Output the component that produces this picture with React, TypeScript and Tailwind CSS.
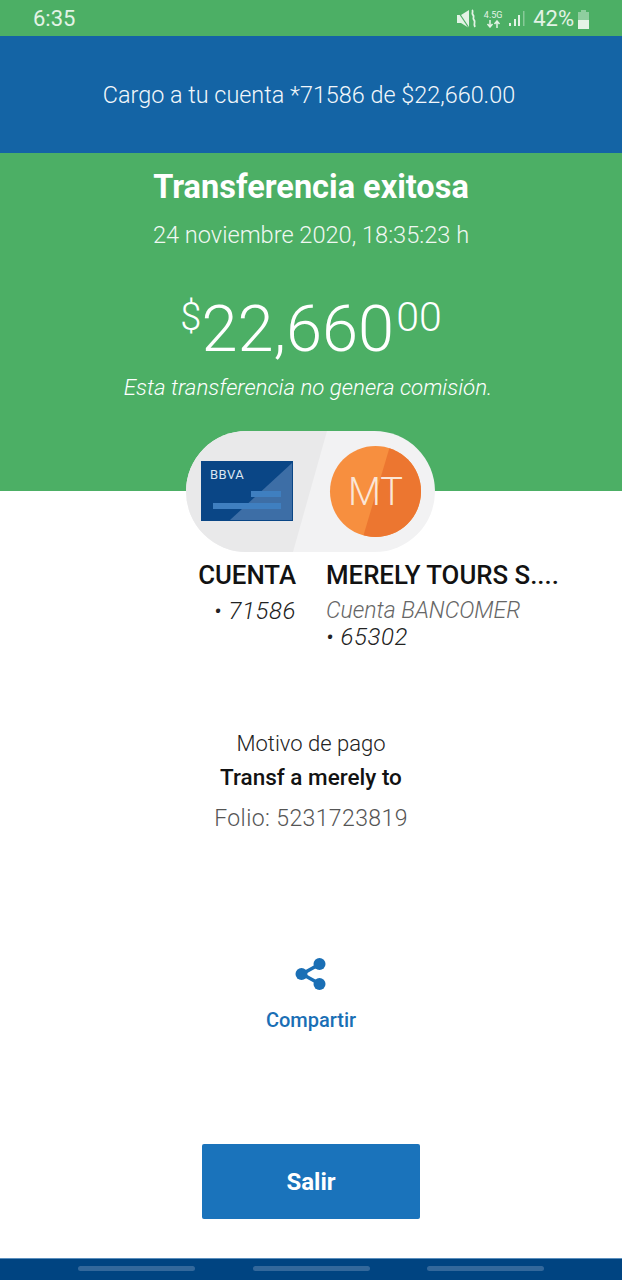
import React from 'react';

const font = { fontFamily: 'Roboto, sans-serif' };

const StatusIcons = () => (
  <div className="flex items-center">
    <svg width="20" height="20" viewBox="0 0 20 20" className="mr-[7px]">
      <path d="M0 6h4l8-5v18l-8-5H0z" fill="#e3f3e6" />
      <path d="M0 1l12 18" stroke="#4caf65" strokeWidth="1.200" />
      <path d="M15 1c2 1.500-1 3 1 5s-1 3 1 5-1 3 1 7" stroke="#e3f3e6" strokeWidth="1.800" fill="none" />
    </svg>
    <div className="flex w-[18px] flex-col items-center mr-[6px]">
      <span className="text-[9px] leading-[10px] text-[#e3f3e6]">4.5G</span>
      <svg width="15" height="8" viewBox="0 0 15 8">
        <path d="M4 0v6M1.500 4L4 7l2.500-3M11 8V2M8.500 4L11 1l2.500 3" stroke="#e3f3e6" strokeWidth="1.500" fill="none" />
      </svg>
    </div>
    <svg width="17" height="18" viewBox="0 0 17 18" className="mr-[8px]">
      <rect x="1" y="13" width="2" height="3" fill="#e3f3e6" />
      <rect x="6" y="9" width="2" height="7" fill="#e3f3e6" />
      <rect x="10" y="5" width="2" height="11" fill="#e3f3e6" />
      <rect x="15" y="1" width="1.500" height="15" fill="#e3f3e6" opacity="0.4" />
    </svg>
    <span className="text-[22px] leading-none text-[#e3f3e6] mr-[3px]">42%</span>
    <svg width="13" height="19" viewBox="0 0 13 19">
      <path d="M4 0h5v2h3v17H1V2h3z" fill="#e3f3e6" opacity="0.45" />
      <rect x="1" y="10" width="11" height="9" fill="#e3f3e6" />
    </svg>
  </div>
);

const CardArt = () => (
  <svg width="92" height="60" viewBox="0 0 92 60">
    <rect width="92" height="60" fill="#0a4686" />
    <path d="M91 2V59H29z" fill="#3d6ea6" />
    <rect x="50" y="30" width="30" height="6" fill="#3f7fc0" />
    <rect x="12" y="42" width="68" height="6" fill="#3f7fc0" />
    <text x="9" y="18" fill="#dbe6f2" fontSize="13" letterSpacing="0.5" fontFamily="Roboto, sans-serif" fontWeight="400">BBVA</text>
  </svg>
);

const Avatar = () => (
  <div className="relative flex h-[91px] w-[91px] items-center justify-center overflow-hidden rounded-full bg-[#f78f3f]">
    <svg width="91" height="91" viewBox="0 0 91 91" className="absolute inset-0">
      <path d="M60 0H91V91H33z" fill="#ec7630" />
    </svg>
    <span className="relative text-[38px] font-light leading-none text-[#fbe6d6]">MT</span>
  </div>
);

const ShareIcon = () => (
  <svg width="32" height="34" viewBox="0 0 32 34">
    <path d="M25 7L7 17l18 10" stroke="#1a6fb5" strokeWidth="3.500" fill="none" />
    <circle cx="24.500" cy="7" r="6" fill="#1a6fb5" />
    <circle cx="6.500" cy="17" r="6" fill="#1a6fb5" />
    <circle cx="24.500" cy="27" r="6" fill="#1a6fb5" />
  </svg>
);

export default function App() {
  return (
    <div className="flex h-[1280px] w-[622px] flex-col overflow-hidden bg-white" style={font}>
      <div className="bg-[#4caf65]">
        <div className="flex h-[36px] items-center justify-between pl-[33px] pr-[32px] pt-[2px]">
          <span className="text-[22px] leading-none text-[#e3f3e6]">6:35</span>
          <StatusIcons />
        </div>
        <div className="flex h-[117px] items-center justify-center bg-[#1464a5] pr-[4px] pt-[2px]">
          <span className="text-[23.400px] font-light text-[#f2f7fb]">Cargo a tu cuenta *71586 de $22,660.00</span>
        </div>
        <div className="flex h-[338px] flex-col items-center">
          <h1 className="mt-[14px] text-[32.500px] font-bold leading-[40px] text-white">Transferencia exitosa</h1>
          <p className="mt-[13px] text-[23.600px] font-light leading-[30px] text-[#f0f8f2]">24 noviembre 2020, 18:35:23 h</p>
          <div className="mt-[37px] flex items-start text-white">
            <span className="mt-[10px] text-[38px] font-light leading-[40px]">$</span>
            <span className="mr-[2px] text-[65px] font-light leading-[84px]">22,660</span>
            <span className="mt-[10px] text-[41px] font-light leading-[40px]">00</span>
          </div>
          <p className="mt-[1px] pr-[6px] text-[22.300px] font-light italic leading-[30px] text-white">Esta transferencia no genera comisión.</p>
        </div>
      </div>

      <div className="relative mt-[-60px] ml-[186px] flex h-[121px] w-[249px] items-center overflow-hidden rounded-full bg-[#f2f2f3]">
        <svg width="142" height="121" viewBox="0 0 142 121" className="absolute left-0 top-0">
          <path d="M0 0H141L107 121H0z" fill="#e9e9ea" />
        </svg>
        <div className="relative ml-[15px] flex items-center">
          <div className="mt-[-1px]">
            <CardArt />
          </div>
          <div className="ml-[37px]">
            <Avatar />
          </div>
        </div>
      </div>

      <div className="mt-[8px] flex">
        <div className="w-[296px] text-right">
          <div className="text-[25.800px] font-medium leading-[30px] text-[#121212]">CUENTA</div>
          <div className="mt-[8px] text-[24px] font-light italic leading-[26px] tracking-[0.6px] text-[#222]">• 71586</div>
        </div>
        <div className="ml-[30px]">
          <div className="text-[25.800px] font-medium leading-[30px] text-[#121212]">MERELY TOURS S....</div>
          <div className="mt-[8px] text-[23px] font-light italic leading-[26px] text-[#666]">Cuenta BANCOMER</div>
          <div className="text-[24px] font-light italic leading-[26px] tracking-[0.6px] text-[#222]">• 65302</div>
        </div>
      </div>

      <div className="mt-[79px] flex flex-col items-center">
        <div className="text-[22px] font-light leading-[30px] text-[#222]">Motivo de pago</div>
        <div className="mt-[3px] text-[22.500px] font-medium leading-[30px] text-[#121212]">Transf a merely to</div>
        <div className="mt-[12px] text-[23px] font-light leading-[30px] tracking-[0.4px] text-[#555]">Folio: 5231723819</div>
      </div>

      <div className="mt-[123px] flex flex-col items-center">
        <ShareIcon />
        <span className="mt-[15px] text-[20px] font-medium leading-[28px] text-[#1a6fb5]">Compartir</span>
      </div>

      <div className="mt-[110px] flex justify-center">
        <button className="h-[75px] w-[218px] rounded-[2px] bg-[#1a73bb] text-[24px] font-bold text-white">Salir</button>
      </div>

      <div className="mt-auto flex h-[22px] items-start justify-between border-t border-[#5b8fbd] bg-[#004481] px-[78px] pt-[7px]">
        <div className="h-[5px] w-[117px] rounded-full bg-[#33689b]" />
        <div className="h-[5px] w-[117px] rounded-full bg-[#33689b]" />
        <div className="h-[5px] w-[117px] rounded-full bg-[#33689b]" />
      </div>
    </div>
  );
}
